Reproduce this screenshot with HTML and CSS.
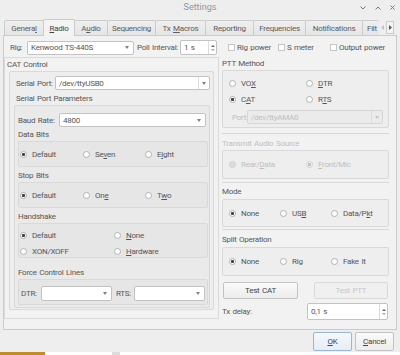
FILE: index.html
```html
<!DOCTYPE html>
<html>
<head>
<meta charset="utf-8">
<title>Settings</title>
<link rel="stylesheet" href="styles.css">
</head>
<body>
<div class="titlebar">
    <span></span>
    <span class="title">Settings</span>
    <div class="wincontrols">
        <svg width="6" height="4" viewBox="0 0 6 4"><path d="M0.5 0.5L3 3L5.5 0.5" fill="none" stroke="#777"/></svg>
        <svg width="6" height="4" viewBox="0 0 6 4"><path d="M0.5 3.5L3 1L5.5 3.5" fill="none" stroke="#777"/></svg>
        <svg width="5" height="5" viewBox="0 0 5 5"><path d="M0.5 0.5L4.5 4.5M4.5 0.5L0.5 4.5" stroke="#777"/></svg>
    </div>
</div>

<div class="tabbar">
    <div class="tab tab-general"><span>Genera<u>l</u></span></div>
    <div class="tab tab-radio active"><span><u>R</u>adio</span></div>
    <div class="tab tab-audio"><span>A<u>u</u>dio</span></div>
    <div class="tab tab-seq"><span>Sequencing</span></div>
    <div class="tab tab-macros"><span>Tx <u>M</u>acros</span></div>
    <div class="tab tab-report"><span>Reportin<u>g</u></span></div>
    <div class="tab tab-freq"><span>Frequencies</span></div>
    <div class="tab tab-notif"><span>Notifications</span></div>
    <div class="tab tab-filt"><span>Filt</span></div>
    <div class="tabscroll">
        <span class="scrollbtn"><svg width="3" height="5" viewBox="0 0 3 5"><path d="M3 0L0 2.5L3 5Z" fill="#c4c4c4"/></svg></span>
        <span class="scrollbtn boxed"><svg width="3" height="5" viewBox="0 0 3 5"><path d="M0 0L3 2.5L0 5Z" fill="#555"/></svg></span>
    </div>
</div>

<div class="pane">
    <div class="rigrow">
        <span class="lbl-rig">Rig:</span>
        <div class="combo rig-combo">Kenwood TS-440S<span class="arrow"></span></div>
        <span class="lbl-poll">Poll Interval:</span>
        <div class="spin poll-spin">1 s<span class="spinarrows"><i class="up"></i><i class="down"></i></span></div>
        <label class="checkitem rigpower"><span class="check"></span>Rig power</label>
        <label class="checkitem smeter"><span class="check"></span>S meter</label>
        <label class="checkitem"><span class="check"></span>Output power</label>
    </div>

    <div class="columns">
        <div class="leftcol">
            <div class="gtitle">CAT Control</div>
            <div class="frame catframe">
                <div class="row serialrow">
                    <span class="serial-lbl">Serial Port:</span>
                    <div class="combo grow">/dev/ttyUSB0<span class="arrowbox"><span class="arrow"></span></span></div>
                </div>
                <div class="subtitle spp-title">Serial Port Parameters</div>
                <div class="frame sppframe">
                    <div class="row baudrow">
                        <span class="baud-lbl">Baud Rate:</span>
                        <div class="combo grow baud-combo">4800<span class="arrow"></span></div>
                    </div>

                    <div class="subtitle first">Data Bits</div>
                    <div class="frame radios three">
                        <label class="radio"><span class="dot on"></span><span>Default</span></label>
                        <label class="radio"><span class="dot"></span><span>Se<u>v</u>en</span></label>
                        <label class="radio"><span class="dot"></span><span>E<u>i</u>ght</span></label>
                    </div>

                    <div class="subtitle">Stop Bits</div>
                    <div class="frame radios three">
                        <label class="radio"><span class="dot on"></span><span>Default</span></label>
                        <label class="radio"><span class="dot"></span><span>On<u>e</u></span></label>
                        <label class="radio"><span class="dot"></span><span>T<u>w</u>o</span></label>
                    </div>

                    <div class="subtitle">Handshake</div>
                    <div class="frame radios handshake">
                        <label class="radio"><span class="dot on"></span><span>Default</span></label>
                        <label class="radio"><span class="dot"></span><span><u>N</u>one</span></label>
                        <label class="radio"><span class="dot"></span><span>XON/XOFF</span></label>
                        <label class="radio"><span class="dot"></span><span><u>H</u>ardware</span></label>
                    </div>

                    <div class="subtitle fcl-title">Force Control Lines</div>
                    <div class="frame fclframe">
                        <span class="dtr-lbl">DTR:</span>
                        <div class="combo fcl-combo"><span class="arrow"></span></div>
                        <span class="rts-lbl">RTS:</span>
                        <div class="combo fcl-combo"><span class="arrow"></span></div>
                    </div>
                </div>
            </div>
        </div>

        <div class="rightcol">
            <div class="section sec-ptt">
                <div class="stitle">PTT Method</div>
                <div class="frame pttframe">
                    <div class="pttgrid">
                        <label class="radio"><span class="dot"></span><span>VO<u>X</u></span></label>
                        <label class="radio"><span class="dot"></span><span><u>D</u>TR</span></label>
                        <label class="radio"><span class="dot on"></span><span>C<u>A</u>T</span></label>
                        <label class="radio"><span class="dot"></span><span>R<u>T</u>S</span></label>
                    </div>
                    <div class="row portrow disabled">
                        <span class="port-lbl">Port:</span>
                        <div class="combo port-combo">/dev/ttyAMA0<span class="arrowbox"><span class="arrow"></span></span></div>
                    </div>
                </div>
            </div>

            <div class="section sec-audio disabled">
                <div class="stitle">Transmit Audio Source</div>
                <div class="frame single two">
                    <label class="radio"><span class="dot off"></span><span>Rear/<u>D</u>ata</span></label>
                    <label class="radio"><span class="dot on"></span><span><u>F</u>ront/Mic</span></label>
                </div>
            </div>

            <div class="section sec-mode">
                <div class="stitle">Mode</div>
                <div class="frame single triple">
                    <label class="radio"><span class="dot on"></span><span>None</span></label>
                    <label class="radio"><span class="dot"></span><span>US<u>B</u></span></label>
                    <label class="radio"><span class="dot"></span><span>Data/P<u>k</u>t</span></label>
                </div>
            </div>

            <div class="sec-split">
                <div class="stitle">Split Operation</div>
                <div class="frame single triple">
                    <label class="radio"><span class="dot on"></span><span>None</span></label>
                    <label class="radio"><span class="dot"></span><span>Rig</span></label>
                    <label class="radio"><span class="dot"></span><span>Fake It</span></label>
                </div>
            </div>

            <div class="testrow">
                <div class="btn testcat">Test CAT</div>
                <div class="btn testptt">Test PTT</div>
            </div>

            <div class="row txrow">
                <span class="tx-lbl">Tx delay:</span>
                <div class="spin tx-spin">0,1 s<span class="spinarrows"><i class="up"></i><i class="down"></i></span></div>
            </div>
        </div>
    </div>
</div>

<div class="dialogbuttons">
    <div class="btn dlg ok"><span><u>O</u>K</span></div>
    <div class="btn dlg"><span><u>C</u>ancel</span></div>
</div>

<div class="taskbar">
    <div class="seg-orange"></div>
    <div class="seg-white"></div>
    <div class="seg-grey"></div>
    <div class="seg-rest"></div>
</div>
</body>
</html>
```

FILE: styles.css
```css
body {
    margin: 0;
    width: 400px;
    height: 355px;
    overflow: hidden;
    background: #eeeeee;
    font-family: Roboto, "Noto Sans", sans-serif;
    font-size: 8px;
    letter-spacing: -0.25px;
    word-spacing: 0.8px;
    color: #575757;
}
u {
    text-decoration-thickness: 1px;
    text-underline-offset: 1px;
}

/* title bar */
.titlebar {
    height: 19px;
    display: grid;
    grid-template-columns: 1fr auto 1fr;
    align-items: start;
}
.title {
    font-size: 9px;
    line-height: 10px;
    padding-top: 2px;
    letter-spacing: 0;
    color: #959595;
}
.wincontrols {
    justify-self: end;
    display: flex;
    align-items: center;
    gap: 9px;
    padding: 5px 5px 0 0;
}

/* tabs */
.tabbar {
    height: 16px;
    display: flex;
    align-items: flex-end;
    padding-left: 4px;
}
.tab {
    box-sizing: border-box;
    flex-shrink: 0;
    height: 15px;
    margin-right: -1px;
    border: 1px solid #cbcbcb;
    border-bottom: none;
    border-radius: 2px 2px 0 0;
    background: linear-gradient(#efefef, #e5e5e5);
    display: flex;
    align-items: center;
    justify-content: center;
    white-space: nowrap;
    color: #5c5c5c;
}
.tab.active {
    height: 17px;
    margin-bottom: -1px;
    background: #f3f3f3;
    color: #444;
    position: relative;
    z-index: 1;
}
.tab-general { width: 40px; }
.tab-radio { width: 32px; }
.tab-audio { width: 34px; }
.tab-seq { width: 49px; }
.tab-macros { width: 51px; }
.tab-report { width: 49px; }
.tab-freq { width: 53px; }
.tab-notif { width: 58px; }
.tab-filt {
    width: 17px;
    justify-content: flex-start;
    padding-left: 4px;
    overflow: hidden;
    border-right: none;
}
.tabscroll {
    display: flex;
    height: 15px;
    align-items: center;
}
.scrollbtn {
    box-sizing: border-box;
    width: 8px;
    height: 13px;
    display: flex;
    align-items: center;
    justify-content: center;
}
.scrollbtn.boxed {
    border: 1px solid #cbcbcb;
    background: #f4f4f4;
}

/* tab pane */
.pane {
    box-sizing: border-box;
    width: 394px;
    height: 295px;
    margin-left: 3px;
    border: 1px solid #cbcbcb;
    background: #f2f2f2;
}
.rigrow {
    display: flex;
    align-items: center;
    height: 15px;
    margin-top: 4px;
    padding-left: 6px;
}
.lbl-rig { width: 17px; }
.rig-combo { width: 107px; height: 15px; }
.lbl-poll { width: 43px; margin-left: 3px; }
.poll-spin { width: 37px; height: 15px; }
.checkitem {
    display: flex;
    align-items: center;
    white-space: nowrap;
}
.rigpower { margin-left: 11px; width: 50px; }
.smeter { width: 52px; }
.check {
    box-sizing: border-box;
    width: 7px;
    height: 7px;
    margin-right: 2px;
    border: 1px solid #c6c6c6;
    background: #fff;
}

.columns {
    display: flex;
    height: 262px;
    margin-top: 2px;
}

/* shared controls */
.row {
    display: flex;
    align-items: center;
}
.grow { flex: 1; }
.frame {
    box-sizing: border-box;
    border: 1px solid #d9d9d9;
    border-radius: 2px;
    background: rgba(0, 0, 0, 0.016);
}
.combo {
    box-sizing: border-box;
    height: 14px;
    padding-left: 3px;
    border: 1px solid #c2c2c2;
    border-radius: 2px;
    background: #fff;
    display: flex;
    align-items: center;
    white-space: nowrap;
}
.arrow {
    width: 0;
    height: 0;
    margin-left: auto;
    margin-right: 4px;
    border-left: 2px solid transparent;
    border-right: 2px solid transparent;
    border-top: 3px solid #808080;
}
.arrowbox {
    margin-left: auto;
    align-self: stretch;
    width: 10px;
    border-left: 1px solid #dcdcdc;
    display: flex;
    align-items: center;
    justify-content: center;
}
.arrowbox .arrow { margin: 0; }
.spin {
    box-sizing: border-box;
    padding-left: 3px;
    border: 1px solid #c2c2c2;
    border-radius: 2px;
    background: #fff;
    display: flex;
    align-items: center;
}
.spinarrows {
    margin-left: auto;
    align-self: stretch;
    width: 7px;
    border-left: 1px solid #dcdcdc;
    display: flex;
    flex-direction: column;
    align-items: center;
    justify-content: center;
    gap: 2px;
}
.spinarrows i {
    width: 0;
    height: 0;
    border-left: 2px solid transparent;
    border-right: 2px solid transparent;
}
.spinarrows .up { border-bottom: 2px solid #666; }
.spinarrows .down { border-top: 2px solid #aaa; }

.radio {
    display: flex;
    align-items: center;
    height: 12px;
    white-space: nowrap;
}
.dot {
    box-sizing: border-box;
    flex-shrink: 0;
    width: 7px;
    height: 7px;
    margin-right: 5px;
    border: 1px solid #b2b2b2;
    border-radius: 50%;
    background: #fff;
}
.dot.on {
    background: radial-gradient(circle, #444 0 1.3px, #fff 1.9px);
}

.btn {
    box-sizing: border-box;
    height: 17px;
    border: 1px solid #c3c3c3;
    border-radius: 2px;
    background: linear-gradient(#fafafa, #ececec);
    display: flex;
    align-items: center;
    justify-content: center;
    color: #444;
}

/* left column */
.leftcol {
    box-sizing: border-box;
    width: 215px;
    height: 262px;
    padding: 0 4px;
    border: 1px solid #dadada;
}
.gtitle {
    height: 13px;
    line-height: 13px;
    margin-left: -2px;
}
.catframe {
    height: 239px;
    padding: 0 3px 0 4px;
}
.serialrow {
    height: 14px;
    margin-top: 4px;
    padding-left: 2px;
}
.serial-lbl { width: 39px; }
.subtitle {
    height: 13px;
    line-height: 13px;
    margin-top: 2px;
}
.subtitle.first { margin-top: 1px; }
.spp-title { padding-left: 2px; }
.sppframe {
    height: 203px;
    padding: 0 1px 0 3px;
}
.baudrow {
    height: 14px;
    margin-top: 7px;
}
.baud-lbl { width: 41px; }
.baud-combo { margin-right: 2px; }
.radios {
    display: grid;
    align-items: center;
    height: 26px;
    padding-left: 1px;
}
.three { grid-template-columns: 63px 62px auto; }
.handshake {
    height: 35px;
    grid-template-columns: 94px auto;
    grid-auto-rows: 12px;
    row-gap: 4px;
    align-content: start;
    padding-top: 5px;
}
.fcl-title { margin-top: 8px; }
.fclframe {
    height: 26px;
    padding: 6px 0 0 2px;
    display: flex;
    align-items: flex-start;
}
.fclframe span { line-height: 15px; }
.dtr-lbl { width: 20px; }
.rts-lbl { width: 18px; margin-left: 4px; }
.fcl-combo { width: 71px; height: 15px; }

/* right column */
.rightcol {
    flex: 1;
    padding: 0 7px 0 3px;
}
.section { border-bottom: 1px solid #d7d7d7; }
.stitle {
    height: 12px;
    line-height: 12px;
}
.sec-ptt { padding-bottom: 5px; }
.sec-ptt .stitle { margin-top: 1px; }
.pttframe {
    height: 58px;
    padding: 6px 0 0 6px;
}
.pttgrid {
    display: grid;
    grid-template-columns: 77px auto;
    grid-auto-rows: 12px;
    row-gap: 4px;
}
.portrow {
    height: 14px;
    margin-top: 5px;
    padding-left: 3px;
}
.port-lbl { width: 15px; }
.port-combo { width: 136px; }
.disabled { color: #c0c0c0; }
.disabled .combo {
    background: #ebebeb;
    border-color: #d5d5d5;
}
.disabled .arrow { border-top-color: #c6c6c6; }
.disabled .dot { border-color: #d0d0d0; }
.disabled .dot.off { background: #dddddd; }
.disabled .dot.on {
    background: radial-gradient(circle, #bdbdbd 0 1.3px, #f4f4f4 1.9px);
}
.sec-audio { padding-bottom: 3px; }
.sec-audio .stitle { margin-top: 4px; }
.sec-audio .frame { height: 29px; }
.sec-mode { padding-bottom: 2px; }
.sec-mode .stitle { margin: 3px 0 1px; }
.sec-mode .frame { height: 28px; }
.sec-split .stitle { margin: 4px 0 1px; }
.sec-split .frame { height: 29px; }
.single {
    display: grid;
    align-items: center;
    padding-left: 6px;
}
.two { grid-template-columns: 77px auto; }
.triple { grid-template-columns: 51px 51px auto; }

.testrow {
    display: flex;
    margin-top: 6px;
}
.testcat { width: 75px; margin-left: 1px; }
.testptt {
    width: 74px;
    margin-left: 16px;
    border-color: #dadada;
    background: #f0f0f0;
    color: #c8c8c8;
}
.txrow { margin-top: 4px; }
.tx-lbl { width: 85px; }
.tx-spin { width: 81px; height: 17px; }

/* dialog buttons */
.dialogbuttons {
    box-sizing: border-box;
    height: 22px;
    padding: 2px 6px 0 0;
    display: flex;
    justify-content: flex-end;
    gap: 3px;
}
.dlg {
    width: 39px;
    height: 19px;
}
.ok {
    border-color: #98b7d5;
    background: linear-gradient(#f6f9fc, #e6edf5);
}

/* strip of the desktop below the dialog */
.taskbar {
    display: flex;
    height: 3px;
}
.seg-orange { width: 45px; background: #c98b1c; }
.seg-white { width: 67px; background: #fff; }
.seg-grey { width: 8px; background: #dcdcdc; }
.seg-rest { flex: 1; background: #fff; }
```
